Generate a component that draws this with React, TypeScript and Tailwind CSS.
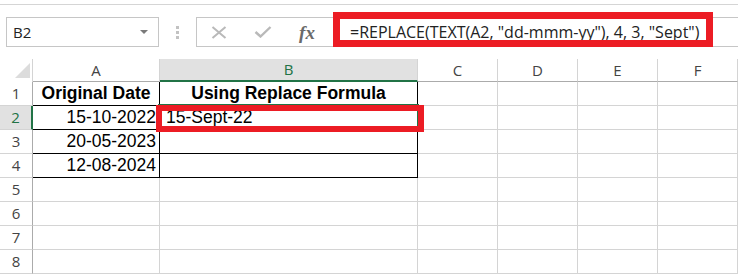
import React from "react";

const COLS = ["A", "B", "C", "D", "E", "F"];
const ROWS = [1, 2, 3, 4, 5, 6, 7, 8];
const DATES = ["15-10-2022", "20-05-2023", "12-08-2024"];

const ui = { fontFamily: '"Open Sans", "Noto Sans", sans-serif' };
const cellFont = { fontFamily: '"Liberation Sans", Arial, sans-serif' };

function NameBox() {
  return (
    <div className="ml-[6px] w-[153px] h-[30px] border border-[#c6c6c6] flex items-center justify-between pl-[6px] pr-[10px]">
      <span className="text-[15px] text-[#222]" style={ui}>
        B2
      </span>
      <span className="w-0 h-0 border-l-[4px] border-r-[4px] border-t-[4px] border-l-transparent border-r-transparent border-t-[#7a7a7a]" />
    </div>
  );
}

function Buttons() {
  return (
    <div className="w-[138px] h-[30px] border border-[#c6c6c6] flex items-center">
      <div className="w-[44px] flex justify-center">
        <svg width="16" height="13" viewBox="0 0 16 13">
          <path d="M1.5 1 L14.5 12 M14.5 1 L1.5 12" stroke="#b9b9b9" strokeWidth="2" fill="none" />
        </svg>
      </div>
      <div className="w-[44px] flex justify-center">
        <svg width="18" height="12" viewBox="0 0 18 12">
          <path d="M1.5 6 L6.5 10.5 L16.5 1" stroke="#b9b9b9" strokeWidth="2.4" fill="none" />
        </svg>
      </div>
      <div className="w-[44px] flex justify-center">
        <span
          className="text-[19px] italic font-bold text-[#6a6a6a] leading-none"
          style={{ fontFamily: '"Liberation Serif", "DejaVu Serif", serif' }}
        >
          fx
        </span>
      </div>
    </div>
  );
}

function FormulaBar() {
  return (
    <div className="flex items-start pt-[12px] pb-[12px]">
      <NameBox />
      <div className="w-[37px] h-[30px] flex flex-col items-center justify-center gap-[2px]">
        <span className="w-[3px] h-[3px] bg-[#c2c2c2]" />
        <span className="w-[3px] h-[3px] bg-[#c2c2c2]" />
        <span className="w-[3px] h-[3px] bg-[#c2c2c2]" />
      </div>
      <Buttons />
      <div className="relative flex-1 h-[30px] border-y border-[#c6c6c6] flex items-center pl-[16px]">
        <span className="text-[16px] text-[#222] whitespace-pre" style={ui}>
          =REPLACE(TEXT(A2, "dd-mmm-yy"), 4, 3, "Sept")
        </span>
        <div className="absolute -left-[1px] -top-[6px] w-[380px] h-[35px] border-[7px] border-[#ec1c24]" />
      </div>
    </div>
  );
}

function ColHeader({ label }: { label: string }) {
  const sel = label === "B";
  return (
    <div
      className={`h-[23px] flex items-center justify-center text-[15px] border-r border-[#d4d4d4] ${
        sel
          ? "bg-[#e1e1e1] text-[#217346] border-b-2 border-b-[#217346]"
          : "bg-white text-[#444] border-b border-b-[#ababab]"
      }`}
      style={ui}
    >
      {label}
    </div>
  );
}

function RowHeader({ n }: { n: number }) {
  const sel = n === 2;
  return (
    <div
      className={`h-[24px] flex items-center justify-center text-[15px] border-b border-[#d4d4d4] ${
        sel
          ? "bg-[#e1e1e1] text-[#217346] border-r-2 border-r-[#217346]"
          : "bg-white text-[#444] border-r border-r-[#ababab]"
      }`}
      style={ui}
    >
      {n}
    </div>
  );
}

function Cell({ row, col }: { row: number; col: string }) {
  const inTable = row <= 4 && (col === "A" || col === "B");
  const border = inTable ? "border-black" : "border-[#d4d4d4]";
  let content: React.ReactNode = null;
  let align = "justify-start pl-[6px]";

  if (row === 1 && col === "A") {
    content = <span className="font-bold">Original Date</span>;
    align = "justify-center";
  } else if (row === 1 && col === "B") {
    content = <span className="font-bold">Using Replace Formula</span>;
    align = "justify-center";
  } else if (col === "A" && row >= 2 && row <= 4) {
    content = DATES[row - 2];
    align = "justify-end pr-[3px]";
  }

  if (row === 2 && col === "B") {
    return (
      <div className={`relative h-[24px] border-r border-b ${border} flex items-center`}>
        <div className="absolute -left-[2px] -top-[2px] -right-[2px] -bottom-[2px] border-2 border-[#217346]" />
        <span className="relative pl-[6px] text-[17.5px] text-black" style={cellFont}>
          15-Sept-22
        </span>
        <div className="absolute -left-[4px] -top-[1px] -right-[7px] -bottom-[3px] border-[6px] border-[#ec1c24]" />
      </div>
    );
  }

  return (
    <div
      className={`h-[24px] border-r border-b ${border} flex items-center ${align} text-[17.5px] text-black whitespace-nowrap overflow-hidden`}
      style={cellFont}
    >
      {content}
    </div>
  );
}

function Sheet() {
  return (
    <div className="grid grid-cols-[33px_127px_258px_80px_80px_80px_80px]">
      <div className="relative h-[23px] border-r border-[#d4d4d4] bg-white">
        <svg className="absolute left-[15px] top-[4px]" width="15" height="15" viewBox="0 0 15 15">
          <path d="M15 0 L15 15 L0 15 Z" fill="#dcdcdc" />
        </svg>
      </div>
      {COLS.map((c) => (
        <ColHeader key={c} label={c} />
      ))}
      {ROWS.map((r) => (
        <React.Fragment key={r}>
          <RowHeader n={r} />
          {COLS.map((c) => (
            <Cell key={c} row={r} col={c} />
          ))}
        </React.Fragment>
      ))}
    </div>
  );
}

export default function App() {
  return (
    <div className="w-[738px] h-[274px] overflow-hidden bg-white">
      <div className="h-[5px] border-b border-[#d5d5d5]" />
      <FormulaBar />
      <Sheet />
    </div>
  );
}
